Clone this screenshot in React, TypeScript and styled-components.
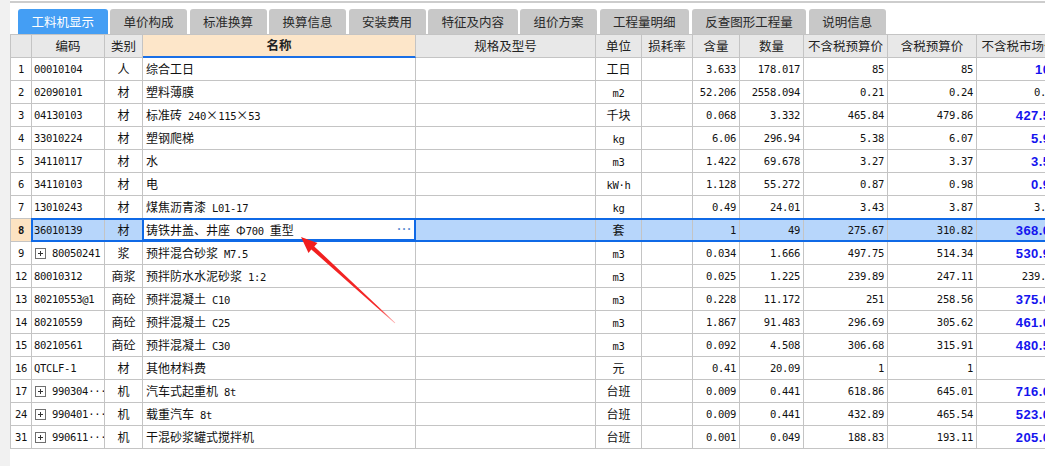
import React from 'react';
import styled, { createGlobalStyle } from 'styled-components';

const GlobalStyle = createGlobalStyle`
  html, body { margin: 0; padding: 0; background: #fff; }
  body { width: 1045px; height: 466px; overflow: hidden; font-family: "Noto Sans CJK SC", sans-serif; }
  #root { height: 466px; }
`;

const COLS = [21, 73, 38, 273, 180, 46, 51, 47, 64, 84, 89, 85];
const GRID_COLS = COLS.map((w) => `${w}px`).join(' ');
const LINE = '#c4c4c4';
const SEL_BLUE = '#0f69e6';

const Page = styled.div`
  position: relative;
  display: flex;
  width: 1045px;
  height: 466px;
  overflow: hidden;
`;

const SideStrip = styled.div`
  width: 10px;
  flex: none;
  background: #f1f1f1;
`;

const Main = styled.div`
  flex: 1;
  min-width: 0;
  display: flex;
  flex-direction: column;
  overflow: hidden;
`;

const TopRule = styled.div`
  height: 2px;
  margin-top: 1px;
  background: #cdcdcd;
`;

const TabBar = styled.div`
  display: flex;
  gap: 2.5px;
  padding-left: 8px;
  margin-top: 6px;
  height: 25px;
`;

const Tab = styled.div<{ $active?: boolean }>`
  display: flex;
  align-items: center;
  height: 25px;
  padding: 0 13.5px;
  border-radius: 3px 3px 0 0;
  font-size: 12.5px;
  white-space: nowrap;
  background: ${(p) => (p.$active ? '#449ef4' : '#c8c8c8')};
  color: ${(p) => (p.$active ? '#ffffff' : '#2a2a2a')};
`;

const Grid = styled.div`
  width: max-content;
  border-top: 1px solid ${LINE};
  border-left: 1px solid ${LINE};
`;

const Row = styled.div<{ $sel?: boolean }>`
  position: relative;
  display: grid;
  grid-template-columns: ${GRID_COLS};
  height: 23px;
  ${(p) =>
    p.$sel
      ? `&::after {
          content: '';
          position: absolute;
          left: 20px;
          right: 0;
          top: -1px;
          bottom: 0;
          border: 2px solid ${SEL_BLUE};
          pointer-events: none;
          z-index: 2;
        }`
      : ''}
`;

const HeadCell = styled.div<{ $main?: boolean }>`
  box-sizing: border-box;
  height: 23px;
  display: flex;
  align-items: center;
  justify-content: center;
  overflow: hidden;
  white-space: nowrap;
  font-size: 12.5px;
  line-height: 1;
  color: #222;
  border-right: 1px solid ${LINE};
  border-bottom: ${(p) => (p.$main ? `2px solid #1a6fe6` : `1px solid ${LINE}`)};
  background: ${(p) => (p.$main ? '#fde6c9' : '#e8e8e8')};
  font-weight: ${(p) => (p.$main ? 700 : 400)};
`;

type Align = 'left' | 'center' | 'right';

const Cell = styled.div<{ $align?: Align; $bg?: string; $active?: boolean; $pl?: number }>`
  position: relative;
  box-sizing: border-box;
  height: 23px;
  display: flex;
  align-items: center;
  justify-content: ${(p) => (p.$align === 'right' ? 'flex-end' : p.$align === 'center' ? 'center' : 'flex-start')};
  padding: 0 3px 0 ${(p) => (p.$pl ?? 3)}px;
  overflow: hidden;
  white-space: nowrap;
  font-size: 12px;
  line-height: 1;
  color: #111;
  border-right: 1px solid ${LINE};
  border-bottom: 1px solid ${LINE};
  background: ${(p) => p.$bg ?? '#fff'};
  ${(p) =>
    p.$active
      ? `overflow: visible;
        justify-content: space-between;
        padding-right: 4px;
        &::after {
          content: '';
          position: absolute;
          left: -1px;
          right: -1px;
          top: -1px;
          bottom: 0;
          border: 2px solid ${SEL_BLUE};
          pointer-events: none;
          z-index: 3;
        }`
      : ''}
`;

const Latin = styled.span<{ $bold?: boolean }>`
  font-family: "DejaVu Sans Mono", "Liberation Mono", monospace;
  font-size: 10.5px;
  letter-spacing: -0.3px;
  white-space: pre;
  font-weight: ${(p) => (p.$bold ? 700 : 400)};
`;

const Cjk = styled.span`
  font-family: "Noto Sans CJK SC", sans-serif;
  font-size: 12px;
`;

const BlueNum = styled.span`
  font-family: "Liberation Sans", Arial, sans-serif;
  font-weight: 700;
  font-size: 13px;
  letter-spacing: 0.4px;
  color: #1414ee;
`;

const Expander = styled.span`
  position: relative;
  box-sizing: border-box;
  width: 11px;
  height: 11px;
  flex: none;
  border: 1px solid #707070;
  margin-right: 6px;
  background: #fff;
  &::before,
  &::after {
    content: '';
    position: absolute;
    background: #333;
  }
  &::before {
    left: 2px;
    right: 2px;
    top: 4px;
    height: 1px;
  }
  &::after {
    top: 2px;
    bottom: 2px;
    left: 4px;
    width: 1px;
  }
`;

const EditDots = styled.span`
  font-family: "DejaVu Sans Mono", monospace;
  font-size: 10px;
  letter-spacing: -1px;
  color: #5a8bd0;
  font-weight: 700;
`;

const ArrowSvg = styled.svg`
  position: absolute;
  left: 0;
  top: 0;
  pointer-events: none;
  z-index: 10;
`;

const LATIN_RE = /([\x20-\x7E·]+)/;
const isLatin = (s: string) => /^[\x20-\x7E·]+$/.test(s);

function Mixed({ text }: { text: string }) {
  const parts = text.split(LATIN_RE).filter(Boolean);
  return (
    <span>
      {parts.map((p, i) => (isLatin(p) ? <Latin key={i}>{p}</Latin> : <Cjk key={i}>{p}</Cjk>))}
    </span>
  );
}

type RowData = {
  n: string;
  code: string;
  exp?: boolean;
  cat: string;
  name: string;
  unit: string;
  qty: string;
  amt: string;
  p1: string;
  p2: string;
  mp: string;
  blue?: boolean;
  sel?: boolean;
};

const ROWS: RowData[] = [
  { n: '1', code: '00010104', cat: '人', name: '综合工日', unit: '工日', qty: '3.633', amt: '178.017', p1: '85', p2: '85', mp: '106', blue: true },
  { n: '2', code: '02090101', cat: '材', name: '塑料薄膜', unit: 'm2', qty: '52.206', amt: '2558.094', p1: '0.21', p2: '0.24', mp: '0.25' },
  { n: '3', code: '04130103', cat: '材', name: '标准砖 240×115×53', unit: '千块', qty: '0.068', amt: '3.332', p1: '465.84', p2: '479.86', mp: '427.50', blue: true },
  { n: '4', code: '33010224', cat: '材', name: '塑钢爬梯', unit: 'kg', qty: '6.06', amt: '296.94', p1: '5.38', p2: '6.07', mp: '5.95', blue: true },
  { n: '5', code: '34110117', cat: '材', name: '水', unit: 'm3', qty: '1.422', amt: '69.678', p1: '3.27', p2: '3.37', mp: '3.50', blue: true },
  { n: '6', code: '34110103', cat: '材', name: '电', unit: 'kW·h', qty: '1.128', amt: '55.272', p1: '0.87', p2: '0.98', mp: '0.95', blue: true },
  { n: '7', code: '13010243', cat: '材', name: '煤焦沥青漆 L01-17', unit: 'kg', qty: '0.49', amt: '24.01', p1: '3.43', p2: '3.87', mp: '3.43' },
  { n: '8', code: '36010139', cat: '材', name: '铸铁井盖、井座 Φ700 重型', unit: '套', qty: '1', amt: '49', p1: '275.67', p2: '310.82', mp: '368.00', blue: true, sel: true },
  { n: '9', code: '80050241', exp: true, cat: '浆', name: '预拌混合砂浆 M7.5', unit: 'm3', qty: '0.034', amt: '1.666', p1: '497.75', p2: '514.34', mp: '530.97', blue: true },
  { n: '12', code: '80010312', cat: '商浆', name: '预拌防水水泥砂浆 1:2', unit: 'm3', qty: '0.025', amt: '1.225', p1: '239.89', p2: '247.11', mp: '239.89' },
  { n: '13', code: '80210553@1', cat: '商砼', name: '预拌混凝土 C10', unit: 'm3', qty: '0.228', amt: '11.172', p1: '251', p2: '258.56', mp: '375.00', blue: true },
  { n: '14', code: '80210559', cat: '商砼', name: '预拌混凝土 C25', unit: 'm3', qty: '1.867', amt: '91.483', p1: '296.69', p2: '305.62', mp: '461.00', blue: true },
  { n: '15', code: '80210561', cat: '商砼', name: '预拌混凝土 C30', unit: 'm3', qty: '0.092', amt: '4.508', p1: '306.68', p2: '315.91', mp: '480.58', blue: true },
  { n: '16', code: 'QTCLF-1', cat: '材', name: '其他材料费', unit: '元', qty: '0.41', amt: '20.09', p1: '1', p2: '1', mp: '1' },
  { n: '17', code: '990304···', exp: true, cat: '机', name: '汽车式起重机 8t', unit: '台班', qty: '0.009', amt: '0.441', p1: '618.86', p2: '645.01', mp: '716.05', blue: true },
  { n: '24', code: '990401···', exp: true, cat: '机', name: '载重汽车 8t', unit: '台班', qty: '0.009', amt: '0.441', p1: '432.89', p2: '465.54', mp: '523.00', blue: true },
  { n: '31', code: '990611···', exp: true, cat: '机', name: '干混砂浆罐式搅拌机', unit: '台班', qty: '0.001', amt: '0.049', p1: '188.83', p2: '193.11', mp: '205.00', blue: true },
];

const TABS = ['工料机显示', '单价构成', '标准换算', '换算信息', '安装费用', '特征及内容', '组价方案', '工程量明细', '反查图形工程量', '说明信息'];
const HEADS = ['', '编码', '类别', '名称', '规格及型号', '单位', '损耗率', '含量', '数量', '不含税预算价', '含税预算价', '不含税市场价'];

const SEL_BG = '#b7d6fb';

function DataRow({ r }: { r: RowData }) {
  const bg = r.sel ? SEL_BG : undefined;
  return (
    <Row $sel={r.sel}>
      <Cell $align="center" $bg={r.sel ? '#fde3c2' : undefined}>
        <Latin $bold={r.sel}>{r.n}</Latin>
      </Cell>
      <Cell $bg={bg} $pl={r.exp ? 3 : 2}>
        {r.exp && <Expander />}
        <Latin>{r.code}</Latin>
      </Cell>
      <Cell $align="center" $bg={bg}>
        <Cjk>{r.cat}</Cjk>
      </Cell>
      <Cell $active={r.sel}>
        <Mixed text={r.name} />
        {r.sel && <EditDots>···</EditDots>}
      </Cell>
      <Cell $bg={bg} />
      <Cell $align="center" $bg={bg}>
        <Mixed text={r.unit} />
      </Cell>
      <Cell $bg={bg} />
      <Cell $align="right" $bg={bg}>
        <Latin>{r.qty}</Latin>
      </Cell>
      <Cell $align="right" $bg={bg}>
        <Latin>{r.amt}</Latin>
      </Cell>
      <Cell $align="right" $bg={bg}>
        <Latin>{r.p1}</Latin>
      </Cell>
      <Cell $align="right" $bg={bg}>
        <Latin>{r.p2}</Latin>
      </Cell>
      <Cell $align="right" $bg={bg}>
        {r.blue ? <BlueNum>{r.mp}</BlueNum> : <Latin>{r.mp}</Latin>}
      </Cell>
    </Row>
  );
}

export default function App() {
  return (
    <>
      <GlobalStyle />
      <Page>
        <SideStrip />
        <Main>
          <TopRule />
          <TabBar>
            {TABS.map((t, i) => (
              <Tab key={t} $active={i === 0}>
                {t}
              </Tab>
            ))}
          </TabBar>
          <Grid>
            <Row>
              {HEADS.map((h, i) => (
                <HeadCell key={i} $main={i === 3}>
                  {h}
                </HeadCell>
              ))}
            </Row>
            {ROWS.map((r) => (
              <DataRow key={r.n} r={r} />
            ))}
          </Grid>
        </Main>
        <ArrowSvg width={1045} height={466} viewBox="0 0 1045 466">
          <defs>
            <linearGradient id="arrowFade" gradientUnits="userSpaceOnUse" x1="301" y1="237" x2="395" y2="323">
              <stop offset="0" stopColor="#f01c1c" />
              <stop offset="0.82" stopColor="#f42a2a" />
              <stop offset="1" stopColor="#ffb4b4" />
            </linearGradient>
          </defs>
          <polygon
            points="301,237 317.5,243 314.3,246.4 395.3,322.7 394.7,323.3 311.3,249.4 308.5,253"
            fill="url(#arrowFade)"
          />
        </ArrowSvg>
      </Page>
    </>
  );
}
